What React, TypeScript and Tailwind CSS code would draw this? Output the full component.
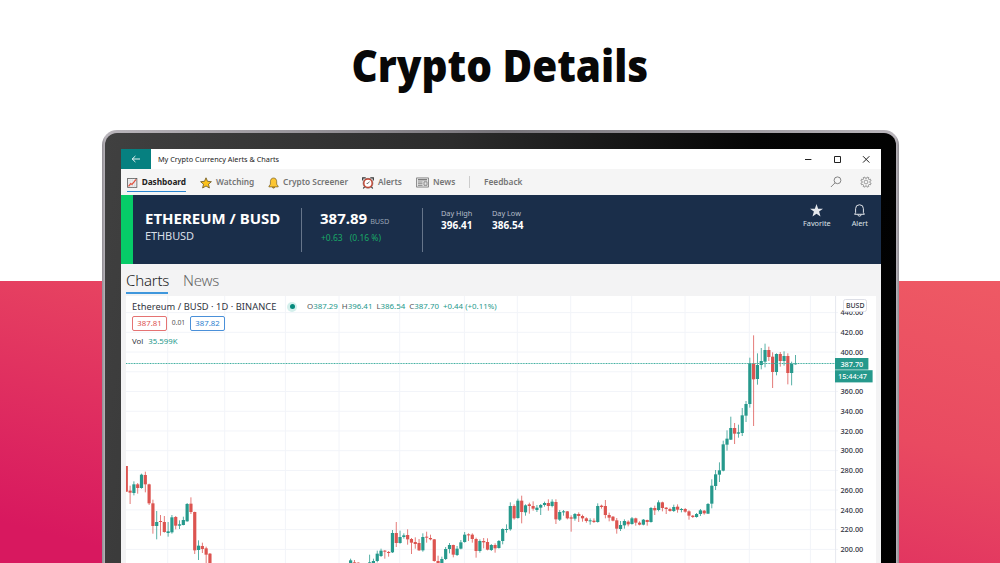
import type { ReactNode } from "react";

type Candle = [index: number, color: "g" | "r", high: number, top: number, bottom: number, low: number];

const UP = "#26998c";
const DOWN = "#dc5450";

// y values are in thirds of a pixel, relative to the group's base line
const GROUPS: { base: number; candles: Candle[] }[] = [
  {
    base: 455,
    candles: [
      [0, "r", 33, 33, 110, 110], [1, "r", 92, 107, 113, 147], [2, "g", 79, 88, 114, 121],
      [3, "r", 84, 88, 99, 116], [4, "g", 56, 59, 99, 101], [5, "r", 50, 60, 88, 112],
      [6, "r", 86, 88, 145, 150], [7, "r", 134, 145, 213, 236], [8, "g", 168, 201, 213, 253],
      [9, "r", 180, 198, 201, 242], [10, "r", 183, 201, 231, 233], [11, "g", 201, 229, 234, 245],
      [12, "g", 180, 187, 232, 236], [13, "r", 183, 186, 212, 223], [14, "g", 196, 208, 212, 222],
      [15, "g", 185, 195, 210, 211], [16, "g", 144, 147, 199, 200], [17, "r", 127, 146, 171, 177],
      [18, "r", 170, 171, 286, 297], [19, "g", 256, 272, 285, 315], [20, "r", 263, 273, 282, 294],
      [21, "r", 275, 280, 299, 330], [22, "r", 294, 296, 340, 345],
    ],
  },
  {
    base: 480,
    candles: [
      [59, "g", 236, 241, 260, 262], [60, "r", 240, 247, 262, 264], [61, "r", 247, 248, 262, 264],
      [64, "g", 224, 247, 262, 264], [65, "g", 236, 243, 262, 264], [66, "g", 212, 221, 243, 247],
      [67, "g", 206, 212, 228, 231], [68, "r", 210, 212, 215, 236], [69, "r", 213, 216, 218, 230],
      [70, "g", 150, 159, 217, 219], [71, "r", 126, 159, 189, 201], [72, "g", 152, 171, 189, 191],
      [73, "g", 160, 166, 171, 176], [74, "r", 148, 165, 178, 194], [75, "r", 174, 177, 188, 222],
      [76, "r", 172, 186, 192, 206], [77, "r", 177, 189, 211, 213], [78, "g", 160, 171, 211, 215],
      [79, "r", 155, 170, 173, 188], [80, "r", 164, 174, 178, 181], [81, "r", 177, 178, 243, 245],
      [82, "r", 227, 243, 250, 258], [83, "g", 230, 237, 250, 252], [84, "g", 201, 207, 237, 240],
      [85, "g", 189, 195, 207, 220], [86, "r", 194, 195, 224, 232], [87, "g", 198, 206, 225, 228],
      [88, "g", 180, 187, 206, 208], [89, "g", 156, 164, 186, 188], [90, "r", 160, 163, 165, 183],
      [91, "r", 160, 164, 177, 188], [92, "r", 173, 177, 213, 233], [93, "g", 178, 183, 213, 218],
      [94, "r", 174, 183, 187, 205], [95, "r", 175, 186, 209, 211], [96, "g", 192, 195, 210, 213],
      [97, "r", 190, 195, 205, 218], [98, "g", 180, 183, 204, 206], [99, "g", 145, 147, 183, 193],
      [100, "g", 133, 147, 149, 158], [101, "g", 67, 78, 148, 152], [102, "r", 73, 78, 115, 119],
      [103, "g", 56, 62, 114, 116], [104, "r", 47, 62, 96, 130], [105, "g", 73, 76, 97, 107],
      [106, "r", 68, 73, 78, 101], [107, "r", 64, 78, 86, 92], [108, "g", 75, 83, 90, 96],
      [109, "g", 72, 75, 83, 105], [110, "g", 65, 69, 75, 80], [111, "r", 58, 69, 78, 92],
      [112, "g", 58, 65, 78, 82], [113, "r", 58, 66, 118, 132], [114, "g", 90, 96, 119, 123],
      [115, "g", 90, 94, 97, 107], [116, "r", 93, 94, 115, 118], [117, "r", 106, 112, 116, 155],
      [118, "g", 99, 102, 116, 122], [119, "r", 97, 102, 108, 126], [120, "r", 104, 108, 115, 125],
      [121, "r", 112, 115, 123, 128], [122, "g", 115, 121, 123, 134], [123, "r", 115, 122, 126, 129],
      [124, "g", 70, 78, 126, 128], [125, "r", 74, 77, 81, 86], [126, "r", 60, 78, 105, 115],
      [127, "r", 98, 105, 113, 124], [128, "r", 108, 110, 122, 124], [129, "r", 114, 121, 146, 161],
      [130, "g", 123, 135, 147, 153], [131, "g", 118, 123, 136, 146], [132, "r", 121, 125, 133, 139],
      [133, "g", 111, 115, 132, 134], [134, "r", 113, 115, 128, 137], [135, "r", 124, 128, 134, 136],
      [136, "g", 117, 119, 134, 136], [137, "r", 119, 120, 126, 137], [138, "g", 81, 84, 126, 128],
      [139, "r", 77, 84, 91, 105], [140, "g", 61, 67, 90, 94], [141, "r", 65, 67, 84, 94],
      [142, "r", 81, 83, 87, 102], [143, "r", 83, 87, 93, 95], [144, "g", 74, 81, 93, 96],
      [145, "r", 73, 80, 89, 98], [146, "g", 84, 87, 90, 97], [147, "r", 84, 87, 95, 98],
      [148, "r", 91, 94, 107, 119], [149, "r", 105, 107, 111, 114], [150, "g", 99, 102, 111, 113],
      [151, "g", 87, 91, 102, 108], [152, "r", 90, 92, 100, 104], [153, "g", 69, 72, 101, 102],
    ],
  },
  {
    base: 420,
    candles: [
      [154, "g", 178, 197, 251, 265], [155, "g", 150, 163, 198, 210], [156, "g", 127, 151, 164, 186],
      [157, "g", 62, 73, 152, 154], [158, "g", 31, 56, 74, 92],
    ],
  },
  {
    base: 290,
    candles: [
      [159, "g", 380, 414, 449, 450], [160, "r", 399, 414, 431, 462], [161, "g", 404, 427, 431, 443],
      [162, "g", 354, 376, 429, 438], [163, "g", 333, 342, 377, 396], [164, "g", 203, 220, 342, 353],
      [165, "r", 136, 220, 268, 408], [166, "g", 190, 225, 267, 284], [167, "g", 174, 213, 225, 238],
      [168, "g", 161, 180, 215, 232], [169, "r", 170, 180, 201, 213], [170, "r", 187, 200, 246, 294],
      [171, "g", 190, 192, 246, 256], [172, "r", 186, 192, 213, 230], [173, "g", 184, 198, 213, 227],
      [174, "r", 190, 198, 249, 283], [175, "g", 215, 222, 249, 286], [176, "g", 195, 220, 223, 224],
    ],
  },
];

const V_LINES = [167.7, 224.7, 285.4, 339, 399.7, 464.4, 517.3, 570.7, 631.7, 685, 749.3, 810.4];
const PRICES = [440, 420, 400, 380, 360, 340, 320, 300, 280, 260, 240, 220, 200];

function priceY(price: number) {
  return 312.6 + ((440 - price) / 20) * 19.73;
}

function PriceChart() {
  return (
    <svg viewBox="126 296 750 267" className="block h-[267px] w-[750px]">
      <rect x="126" y="296" width="750" height="267" fill="#fff" />
      {V_LINES.map((x) => (
        <line key={x} x1={x} x2={x} y1="296" y2="563" stroke="#f2f4f9" />
      ))}
      {PRICES.map((p) => (
        <line key={p} x1="126" x2="838" y1={priceY(p)} y2={priceY(p)} stroke="#f2f4f9" />
      ))}
      <line x1="835.6" x2="835.6" y1="296" y2="563" stroke="#e6e8ef" />

      {GROUPS.flatMap(({ base, candles }) =>
        candles.map(([i, color, high, top, bottom, low]) => {
          const x = 126.3 + i * 3.802;
          const fill = color === "g" ? UP : DOWN;
          return (
            <g key={i} fill={fill}>
              <rect x={x - 0.45} y={base + high / 3} width="0.9" height={(low - high) / 3} opacity="0.85" />
              <rect x={x - 1.6} y={base + top / 3} width="3.2" height={Math.max((bottom - top) / 3, 1)} />
            </g>
          );
        }),
      )}

      <line x1="126" x2="836" y1="363.5" y2="363.5" stroke="#3fae9f" strokeDasharray="1 0.6" />

      <g fontFamily="'Noto Sans', sans-serif" fontSize="7.3" fontWeight="500" fill="#30333d">
        {PRICES.filter((p) => p !== 380).map((p) => (
          <text key={p} x="840.4" y={priceY(p) + 2.6}>
            {p.toFixed(2)}
          </text>
        ))}
        <rect x="843.5" y="299.5" width="23" height="12" rx="2" fill="#fff" stroke="#dcdee6" />
        <text x="846" y="308" fontSize="6.9">BUSD</text>
        <rect x="835" y="358" width="33.4" height="11.6" fill={UP} />
        <rect x="835" y="370.2" width="37.6" height="12.2" fill={UP} />
        <g fill="#fff">
          <text x="840.4" y="366.5">387.70</text>
          <text x="838" y="379">15:44:47</text>
        </g>
      </g>
    </svg>
  );
}

function ChartUpIcon() {
  return (
    <svg viewBox="0 0 12 12" className="h-3 w-3">
      <rect x="0.7" y="0.9" width="10.4" height="10" fill="#f4f4f4" stroke="#555" strokeWidth="0.9" />
      <path d="M3.5 1v10M6 1v10M8.5 1v10M1 3.5h10M1 6h10M1 8.5h10" stroke="#c9ccd0" strokeWidth="0.4" />
      <path d="M1.7 9.8 4.2 6.6 5.6 7.6 10.3 2" fill="none" stroke="#e2523f" strokeWidth="1.4" />
    </svg>
  );
}

function StarIcon() {
  return (
    <svg viewBox="0 0 12 12" className="h-3 w-3">
      <path
        d="M6 .8 7.5 4.3 11.4 4.7 8.5 7.2 9.4 11 6 9 2.6 11 3.5 7.2.6 4.7 4.5 4.3Z"
        fill="#fcc21b" stroke="#6b541e" strokeWidth="0.8" strokeLinejoin="round"
      />
    </svg>
  );
}

function GoldBellIcon() {
  return (
    <svg viewBox="0 0 12 12" className="h-3 w-3" stroke="#6b541e" strokeWidth="0.7">
      <circle cx="6" cy="10.4" r="1.2" fill="#e8a812" />
      <path d="M6 .6C3.6.6 2.6 2.4 2.6 4.7v2.6L1 9.5v.7h10v-.7L9.4 7.3V4.7C9.4 2.4 8.4.6 6 .6Z" fill="#fcc633" />
    </svg>
  );
}

function AlarmIcon() {
  return (
    <svg viewBox="0 0 12 12" className="h-3 w-3">
      <path d="M.7 3.5V.8h3M11.3 3.5V.8h-3M2.5 9.8 1.3 11.5M9.5 9.8l1.2 1.7" fill="none" stroke="#333" strokeWidth="1.2" />
      <circle cx="6" cy="6.3" r="4.2" fill="#fff" stroke="#c94a37" strokeWidth="1.5" />
      <circle cx="6" cy="6.3" r="5" fill="none" stroke="#5a2c26" strokeWidth="0.4" />
      <path d="M7.4 4.6 6 6.4h-1.4" fill="none" stroke="#333" strokeWidth="0.7" />
    </svg>
  );
}

function NewspaperIcon() {
  return (
    <svg viewBox="0 0 13 11" className="h-[11px] w-[13px]" fill="none" stroke="#777" strokeWidth="0.8">
      <path d="M.5.9h12v9.2H.5z" fill="#e4e4e4" />
      <path d="M2 2.7h9" strokeWidth="1.3" />
      <path d="M2 5h4.5M2 6.7h4.5M2 8.4h4.5" />
      <path d="M8 4.8h3v3.5H8z" />
    </svg>
  );
}

function NavItem({ icon, label, active, className }: { icon?: ReactNode; label: string; active?: boolean; className: string }) {
  return (
    <div className={`flex h-[23px] shrink-0 items-center border-b-[1.5px] pt-[5px] ${active ? "gap-1 border-[#2b86d0] font-bold text-[#222]" : "gap-1 border-transparent font-semibold text-[#747474]"} ${className}`}>
      {icon}
      <span className="whitespace-nowrap">{label}</span>
    </div>
  );
}

function TitleBar() {
  return (
    <div className="flex h-5 items-stretch bg-white">
      <div className="flex w-[30px] items-center justify-center bg-[#068080]">
        <svg viewBox="0 0 10 8" className="h-2 w-[10px]" fill="none" stroke="#fff" strokeWidth="0.9">
          <path d="M9 4H1.2M4.4 1 1.2 4l3.2 3" />
        </svg>
      </div>
      <div className="ml-[7px] flex items-center pt-px text-[7.3px] text-[#222]">My Crypto Currency Alerts &amp; Charts</div>
      <div className="ml-auto mr-[11px] flex items-center gap-[21px]">
        <svg viewBox="0 0 8 8" className="h-2 w-2" fill="none" stroke="#222"><path d="M1 4.5h6.4" /></svg>
        <svg viewBox="0 0 8 8" className="h-2 w-2" fill="none" stroke="#222"><path d="M1.5 1.5h6v6h-6z" /></svg>
        <svg viewBox="0 0 8 8" className="h-2 w-2" fill="none" stroke="#222"><path d="m1 1.2 6.4 6.4M7.4 1.2 1 7.6" /></svg>
      </div>
    </div>
  );
}

function NavBar() {
  return (
    <div className="flex h-[26px] items-start bg-[#f5f5f5] pl-[6px] pr-[9px] text-[8.3px]">
      <NavItem active icon={<ChartUpIcon />} label="Dashboard" className="w-[59px] tracking-[-0.05px]" />
      <NavItem icon={<StarIcon />} label="Watching" className="ml-[14px] w-[55px]" />
      <NavItem icon={<GoldBellIcon />} label="Crypto Screener" className="ml-[13px] w-20" />
      <NavItem icon={<AlarmIcon />} label="Alerts" className="ml-[14px] w-10" />
      <NavItem icon={<NewspaperIcon />} label="News" className="ml-[14px] w-10" />
      <div className="ml-[13px] mt-[7px] h-3 w-px bg-[#ccc]" />
      <NavItem label="Feedback" className="ml-[14px]" />
      <div className="ml-auto flex h-[26px] items-center gap-[18px]">
        <svg viewBox="0 0 12 12" className="h-3 w-3" fill="none" stroke="#777" strokeWidth="0.9">
          <circle cx="7.5" cy="4.3" r="3.4" />
          <path d="M5.1 6.8.9 11" />
        </svg>
        <svg viewBox="0 0 12 12" className="h-3 w-3" fill="none" stroke="#888" strokeWidth="0.8">
          <path d="m4.9 1 .3 1.3h1.6L7.1 1l1.9.8-.7 1.2.8.8 1.3-.7.7 1.8-1.3.4v1.4l1.3.4-.7 1.8-1.3-.6-.8.8.6 1.3-1.8.8-.4-1.3H5.3l-.4 1.3-1.8-.8.6-1.3-.8-.8-1.3.6-.7-1.8 1.3-.4V5.3L.9 4.9l.7-1.8 1.3.7.8-.8-.7-1.2Z" />
          <circle cx="6" cy="6" r="1.9" />
        </svg>
      </div>
    </div>
  );
}

function QuoteHeader() {
  return (
    <div className="flex h-[69px] bg-[#1a2e4a] text-white">
      <div className="w-3 bg-[#06cc68]" />
      <div className="ml-3 w-[156px] pt-[13px]">
        <div className="whitespace-nowrap text-[15px] font-bold leading-5">ETHEREUM / BUSD</div>
        <div className="mt-px text-[11px] leading-[14px] tracking-[-0.1px] text-[#d9dee6]">ETHBUSD</div>
      </div>
      <div className="mt-[13px] h-11 w-px bg-[#66758a]" />
      <div className="ml-[18px] w-[102px] pt-[13px]">
        <div className="flex items-baseline gap-[3px] whitespace-nowrap leading-5">
          <span className="text-[15px] font-bold">387.89</span>
          <span className="text-[7.3px] tracking-[-0.1px] text-[#98a3b3]">BUSD</span>
        </div>
        <div className="ml-px flex gap-[7px] whitespace-nowrap text-[8.5px] leading-[14px] text-[#19a866]">
          <span>+0.63</span>
          <span>(0.16 %)</span>
        </div>
      </div>
      <div className="mt-[13px] h-11 w-px bg-[#66758a]" />
      <div className="ml-[18px] flex whitespace-nowrap pt-3">
        <div className="w-[51px]">
          <div className="text-[7.3px] leading-3 text-[#b5bdc9]">Day High</div>
          <div className="text-[10px] font-bold leading-[13px]">396.41</div>
        </div>
        <div>
          <div className="text-[7.3px] leading-3 text-[#b5bdc9]">Day Low</div>
          <div className="text-[10px] font-bold leading-[13px]">386.54</div>
        </div>
      </div>
      <div className="ml-auto mr-[13px] flex gap-[21px] pt-[9px] text-[7.3px] leading-3 text-[#dfe3e9]">
        <div className="flex flex-col items-center">
          <svg viewBox="0 0 12 12" className="h-[13px] w-[13px]" fill="#e4e7ec">
            <path d="M6 0 7.5 4.3H12L8.4 7 9.7 11.6 6 8.9 2.3 11.6 3.6 7 0 4.3h4.5Z" />
          </svg>
          <span>Favorite</span>
        </div>
        <div className="flex flex-col items-center">
          <svg viewBox="0 0 12 12" className="h-[13px] w-[13px]" fill="none" stroke="#e4e7ec" strokeWidth="0.9">
            <path d="M1.5 9.5h9L9.6 8V4.3a3.6 3.6 0 0 0-7.2 0V8ZM4.5 9.700a1.5 1.5 0 0 0 3 0" />
          </svg>
          <span>Alert</span>
        </div>
      </div>
    </div>
  );
}

function ChartLegend() {
  return (
    <div className="absolute left-[6px] top-1 whitespace-nowrap text-[#30333d]">
      <div className="flex h-[13px] items-center">
        <span className="w-[155px] text-[9.3px] tracking-[0.05px]">Ethereum / BUSD · 1D · BINANCE</span>
        <span className="flex h-[10px] w-[10px] items-center justify-center rounded-full bg-[#d4efec]">
          <span className="h-[5px] w-[5px] rounded-full bg-[#06897c]" />
        </span>
        <div className="ml-[10px] flex gap-1 text-[7.9px] text-[#26998c]">
          <span><span className="text-[#555]">O</span>387.29</span>
          <span><span className="text-[#555]">H</span>396.41</span>
          <span><span className="text-[#555]">L</span>386.54</span>
          <span><span className="text-[#555]">C</span>387.70</span>
          <span>+0.44 (+0.11%)</span>
        </div>
      </div>
      <div className="mt-[3px] flex h-[15px] items-center text-[7.8px]">
        <span className="flex h-[15px] w-[35px] items-center justify-center rounded-[2px] border border-[#e57373] text-[#dc5450]">387.81</span>
        <span className="w-[23px] text-center text-[6.8px] text-[#555]">0.01</span>
        <span className="flex h-[15px] w-[35px] items-center justify-center rounded-[2px] border border-[#4a90d9] text-[#2b7fd0]">387.82</span>
      </div>
      <div className="mt-[5px] flex h-3 items-center gap-[5px] text-[7.8px]">
        <span>Vol</span>
        <span className="text-[#26998c]">35.599K</span>
      </div>
    </div>
  );
}

export default function App() {
  return (
    <div className="flex h-[563px] w-[1000px] flex-col items-center overflow-hidden bg-[linear-gradient(to_bottom,#fff_281px,transparent_281px),linear-gradient(14deg,#d8185f_5%,#e94a61_43%,#f46a68_90%)] font-['Noto_Sans',sans-serif]">
      <h1 className="flex h-[130px] shrink-0 scale-x-[0.9] items-center whitespace-nowrap text-[45px] font-black text-[#080808]">Crypto Details</h1>

      <div className="ml-px h-[460px] w-[797px] shrink-0 rounded-t-[15px] bg-[linear-gradient(to_right,#8f8c92,#b9b5bb_3px,#77747a_50%,#b9b5bb_794px,#8f8c92)] px-[3px] pt-[3px]">
        <div className="h-full rounded-t-[12px] bg-[linear-gradient(100deg,#404040,#2c2c2c_40%,#050505_75%,#000)] px-4 pt-4">
          <div className="h-full w-[760px] bg-[#f3f3f4]">
            <TitleBar />
            <NavBar />
            <QuoteHeader />
            <div className="flex h-8 gap-[15px] pl-[5px] pt-[5px] text-[15px] font-light leading-[22px] tracking-[-0.2px]">
              <div className="h-[25px] w-[42px] border-b-2 border-[#3f97dc] text-[#222]">Charts</div>
              <div className="text-[#666]">News</div>
            </div>
            <div className="relative ml-[5px] w-[750px]">
              <PriceChart />
              <ChartLegend />
            </div>
          </div>
        </div>
      </div>
    </div>
  );
}
